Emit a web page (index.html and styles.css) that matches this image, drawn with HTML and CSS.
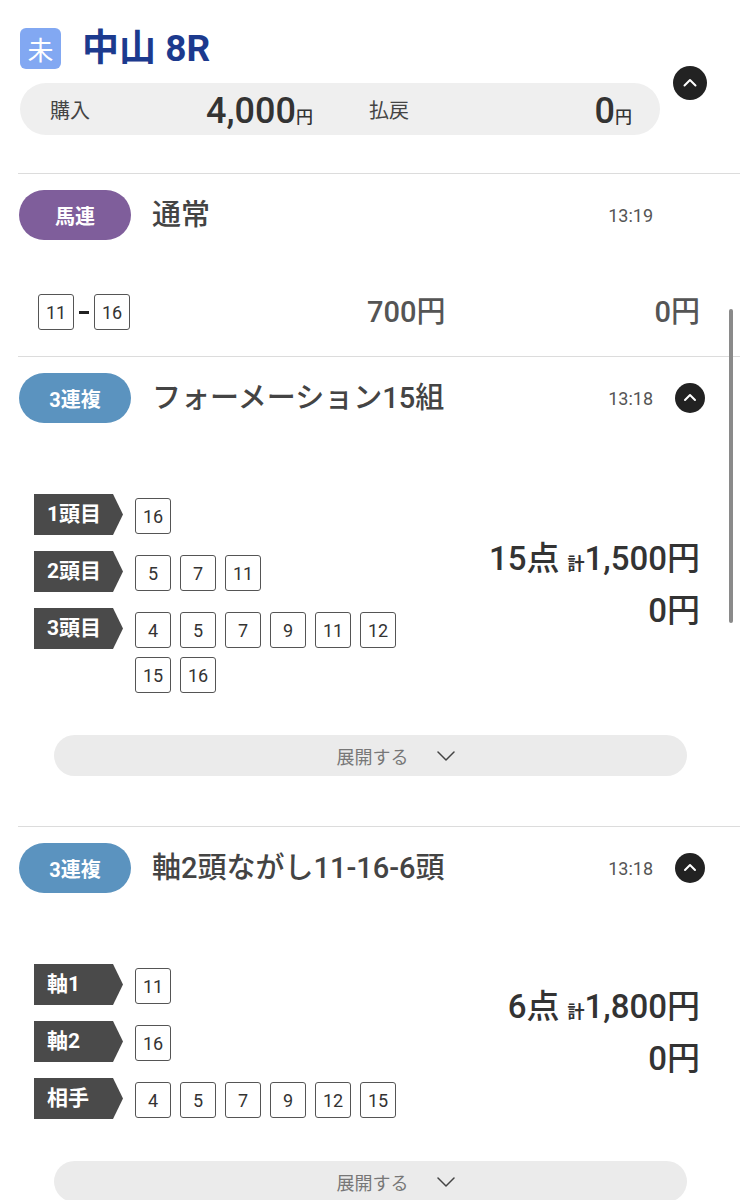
FILE: index.html
```html
<!DOCTYPE html>
<html lang="ja">
<head>
<meta charset="utf-8">
<title>中山 8R</title>
<link rel="stylesheet" href="styles.css">
</head>
<body>
<div class="race">
  <div class="race-main">
    <div class="race-title">
      <span class="badge-mi">未</span>
      <h1>中山 8R</h1>
    </div>
    <div class="summary">
      <div class="sum-item"><span class="sum-label">購入</span><span class="sum-value">4,000<small>円</small></span></div>
      <div class="sum-item"><span class="sum-label">払戻</span><span class="sum-value">0<small>円</small></span></div>
    </div>
  </div>
  <button class="toggle toggle-lg" aria-label="閉じる">
    <svg viewBox="0 0 34 34" width="34" height="34"><path d="M11.5 19.5 L17 14 L22.5 19.5" fill="none" stroke="#fff" stroke-width="2" stroke-linecap="round" stroke-linejoin="round"/></svg>
  </button>
</div>

<section class="bet bet-first">
  <div class="bet-head">
    <span class="type type-umaren">馬連</span>
    <span class="bet-title">通常</span>
    <span class="time">13:19</span>
    <span class="toggle-slot"></span>
  </div>
  <div class="simple">
    <div class="combo"><span class="num">11</span><span class="dash"></span><span class="num">16</span></div>
    <div class="amount">700円</div>
    <div class="payout">0円</div>
  </div>
</section>

<section class="bet">
  <div class="bet-head">
    <span class="type type-trio">3連複</span>
    <span class="bet-title">フォーメーション15組</span>
    <span class="time">13:18</span>
    <span class="toggle-slot">
      <button class="toggle" aria-label="閉じる">
        <svg viewBox="0 0 30 30" width="30" height="30"><path d="M10 17 L15 12 L20 17" fill="none" stroke="#fff" stroke-width="2" stroke-linecap="round" stroke-linejoin="round"/></svg>
      </button>
    </span>
  </div>
  <div class="formation">
    <div class="legs">
      <div class="leg"><span class="leg-label">1頭目</span><div class="nums"><span class="num">16</span></div></div>
      <div class="leg"><span class="leg-label">2頭目</span><div class="nums"><span class="num">5</span><span class="num">7</span><span class="num">11</span></div></div>
      <div class="leg"><span class="leg-label">3頭目</span><div class="nums"><span class="num">4</span><span class="num">5</span><span class="num">7</span><span class="num">9</span><span class="num">11</span><span class="num">12</span><span class="num">15</span><span class="num">16</span></div></div>
    </div>
    <div class="totals">
      <div class="total-line">15点 <small>計</small>1,500円</div>
      <div class="total-line">0円</div>
    </div>
  </div>
  <button class="expand">展開する
    <svg viewBox="0 0 18 10" width="18" height="10"><path d="M1 1 L9 9 L17 1" fill="none" stroke="#444" stroke-width="1.5" stroke-linecap="round" stroke-linejoin="round"/></svg>
  </button>
</section>

<section class="bet">
  <div class="bet-head">
    <span class="type type-trio">3連複</span>
    <span class="bet-title">軸2頭ながし11-16-6頭</span>
    <span class="time">13:18</span>
    <span class="toggle-slot">
      <button class="toggle" aria-label="閉じる">
        <svg viewBox="0 0 30 30" width="30" height="30"><path d="M10 17 L15 12 L20 17" fill="none" stroke="#fff" stroke-width="2" stroke-linecap="round" stroke-linejoin="round"/></svg>
      </button>
    </span>
  </div>
  <div class="formation">
    <div class="legs">
      <div class="leg"><span class="leg-label">軸1</span><div class="nums"><span class="num">11</span></div></div>
      <div class="leg"><span class="leg-label">軸2</span><div class="nums"><span class="num">16</span></div></div>
      <div class="leg"><span class="leg-label">相手</span><div class="nums"><span class="num">4</span><span class="num">5</span><span class="num">7</span><span class="num">9</span><span class="num">12</span><span class="num">15</span></div></div>
    </div>
    <div class="totals">
      <div class="total-line">6点 <small>計</small>1,800円</div>
      <div class="total-line">0円</div>
    </div>
  </div>
  <button class="expand">展開する
    <svg viewBox="0 0 18 10" width="18" height="10"><path d="M1 1 L9 9 L17 1" fill="none" stroke="#444" stroke-width="1.5" stroke-linecap="round" stroke-linejoin="round"/></svg>
  </button>
</section>

<div class="scrollbar"></div>
</body>
</html>
```

FILE: styles.css
```css
html { overflow: hidden; }
body {
  margin: 0;
  background: #fff;
  color: #444;
  font-family: "Roboto", "Noto Sans CJK JP", "Noto Sans", sans-serif;
  width: 740px;
}

button {
  font-family: inherit;
  border: 0;
  padding: 0;
  cursor: pointer;
}

/* race header */
.race {
  display: flex;
  align-items: center;
  gap: 13px;
  padding: 28px 33px 0 20px;
}
.race-main { width: 640px; }
.race-title {
  display: flex;
  align-items: center;
  gap: 21px;
  height: 41px;
}
.badge-mi {
  width: 41px;
  height: 41px;
  border-radius: 6px;
  background: #82a8f2;
  color: #fff;
  font-family: "Noto Sans CJK JP", sans-serif;
  font-size: 26px;
  line-height: 41px;
  text-align: center;
}
.race-title h1 {
  margin: 0;
  font-size: 37px;
  line-height: 41px;
  font-weight: 700;
  color: #1c3a8e;
}
.summary {
  margin-top: 14px;
  height: 52px;
  border-radius: 26px;
  background: #efefef;
  display: grid;
  grid-template-columns: 1fr 1fr;
  column-gap: 56px;
  align-items: center;
  padding: 0 28px 0 30px;
}
.sum-item {
  display: flex;
  justify-content: space-between;
  align-items: center;
}
.sum-label { font-size: 20px; color: #444; }
.sum-value {
  font-size: 36px;
  font-weight: 500;
  color: #333;
  line-height: 1;
  padding-top: 4px;
}
.sum-value small { font-size: 17px; font-weight: 500; }

.toggle {
  width: 30px;
  height: 30px;
  border-radius: 50%;
  background: #222;
  display: flex;
  align-items: center;
  justify-content: center;
}
.toggle-lg { width: 34px; height: 34px; margin-top: 3px; flex: none; }

/* bet sections */
.bet {
  margin-left: 18px;
  border-top: 1px solid #dcdcdc;
  padding: 16px 0 50px 1px;
}
.bet-first { margin-top: 38px; padding-bottom: 0; }
.bet-head {
  display: flex;
  align-items: center;
  height: 50px;
  padding-right: 33px;
}
.type {
  width: 112px;
  height: 50px;
  border-radius: 25px;
  color: #fff;
  font-size: 20px;
  font-weight: 700;
  display: flex;
  align-items: center;
  justify-content: center;
}
.type-umaren { background: #7f5e9b; }
.type-trio { background: #5b93bf; }
.bet-title {
  flex: 1;
  margin-left: 21px;
  font-size: 29px;
  font-weight: 500;
  line-height: 1;
  color: #444;
}
.time { font-size: 18px; color: #555; }
.toggle-slot {
  width: 34px;
  margin-left: 20px;
  display: flex;
  justify-content: center;
}

.num {
  width: 36px;
  height: 36px;
  box-sizing: border-box;
  border: 1.5px solid #555;
  border-radius: 3px;
  display: flex;
  align-items: center;
  justify-content: center;
  font-size: 18px;
  color: #333;
}

.simple {
  display: grid;
  grid-template-columns: 329px auto 1fr;
  align-items: center;
  margin: 54px 0 0;
  padding: 0 40px 26px 19px;
}
.combo { display: flex; align-items: center; }
.dash {
  width: 10px;
  height: 3px;
  background: #222;
  margin: 0 5px;
}
.amount, .payout { font-size: 29px; font-weight: 500; line-height: 36px; color: #555; }
.payout { text-align: right; }

.formation {
  display: flex;
  justify-content: space-between;
  margin-top: 71px;
  padding: 0 40px 0 15px;
}
.legs {
  display: flex;
  flex-direction: column;
  gap: 16px;
}
.leg { display: flex; align-items: flex-start; }
.leg-label {
  width: 89px;
  height: 41px;
  flex: none;
  box-sizing: border-box;
  padding-left: 13px;
  background: #4a4a4a;
  color: #fff;
  font-size: 21px;
  font-weight: 700;
  line-height: 41px;
  clip-path: polygon(0 0, 79px 0, 100% 50%, 79px 100%, 0 100%);
}
.nums {
  margin: 4px 0 0 12px;
  display: flex;
  flex-wrap: wrap;
  gap: 9px;
  width: 261px;
}
.totals {
  align-self: center;
  margin-bottom: 17px;
  text-align: right;
}
.total-line {
  font-size: 33px;
  font-weight: 500;
  line-height: 52px;
  color: #333;
}
.total-line small { font-size: 17px; font-weight: 700; line-height: 1; }

.expand {
  margin: 42px 0 0 35px;
  width: 633px;
  height: 41px;
  border-radius: 21px;
  background: #ebebeb;
  color: #777;
  font-size: 18px;
  display: flex;
  align-items: center;
  justify-content: center;
  gap: 28px;
  padding-left: 50px;
}

.scrollbar {
  position: fixed;
  left: 729px;
  top: 309px;
  width: 4px;
  height: 314px;
  border-radius: 2px;
  background: #8a8a8a;
}
```
